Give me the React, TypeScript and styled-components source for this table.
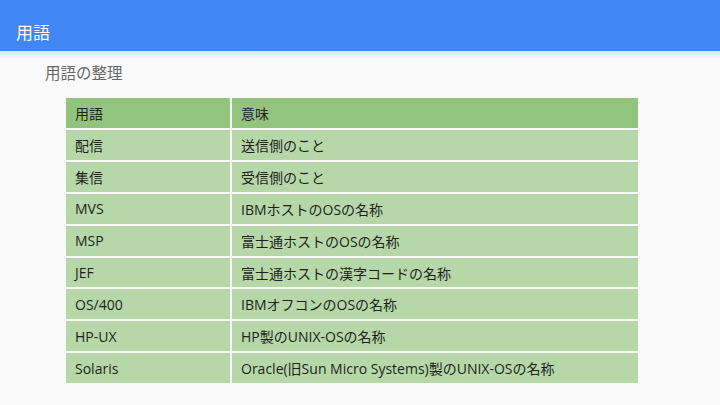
import styled, { createGlobalStyle } from 'styled-components';

const GlobalStyle = createGlobalStyle`
  html, body {
    margin: 0;
    padding: 0;
    background: #fafafa;
  }
  body {
    font-family: "Noto Sans CJK JP", "Liberation Sans", sans-serif;
  }
`;

const Page = styled.div`
  width: 720px;
  height: 405px;
  overflow: hidden;
  background: #fafafa;
  display: flex;
  flex-direction: column;
`;

const TopBar = styled.header`
  height: 51px;
  box-sizing: border-box;
  background: #4285f4;
  display: flex;
  align-items: center;
  padding: 12px 0 0 16px;
  color: #fff;
  font-size: 17px;
  flex-shrink: 0;
`;

const Shade = styled.div`
  height: 7px;
  background: linear-gradient(#dfe7f5, #f2f4f8);
  flex-shrink: 0;
`;

const Subtitle = styled.h2`
  margin: 0;
  padding: 3px 0 0 45px;
  height: 26px;
  font-size: 15.5px;
  font-weight: 400;
  color: #666;
`;

const TableWrap = styled.div`
  padding: 11px 0 0 66px;
`;

const Grid = styled.div`
  width: 572px;
  display: grid;
  grid-template-columns: 164px 1fr;
  row-gap: 2px;
  column-gap: 2px;
  background: #fafafa;
`;

const Cell = styled.div<{ $head?: boolean }>`
  height: ${p => (p.$head ? '30px' : '29.9px')};
  display: flex;
  align-items: center;
  padding-left: 9px;
  background: ${p => (p.$head ? '#93c47d' : '#b6d7a8')};
  color: #1f1f1f;
  font-family: "Open Sans", "Noto Sans CJK JP", sans-serif;
  font-size: 14px;
  white-space: nowrap;
`;

const rows: [string, string][] = [
  ['配信', '送信側のこと'],
  ['集信', '受信側のこと'],
  ['MVS', 'IBMホストのOSの名称'],
  ['MSP', '富士通ホストのOSの名称'],
  ['JEF', '富士通ホストの漢字コードの名称'],
  ['OS/400', 'IBMオフコンのOSの名称'],
  ['HP-UX', 'HP製のUNIX-OSの名称'],
  ['Solaris', 'Oracle(旧Sun Micro Systems)製のUNIX-OSの名称'],
];

export default function App() {
  return (
    <Page>
      <GlobalStyle />
      <TopBar>用語</TopBar>
      <Shade />
      <Subtitle>用語の整理</Subtitle>
      <TableWrap>
        <Grid>
          <Cell $head>用語</Cell>
          <Cell $head>意味</Cell>
          {rows.map(([term, meaning]) => (
            <>
              <Cell key={term}>{term}</Cell>
              <Cell key={term + '-m'}>{meaning}</Cell>
            </>
          ))}
        </Grid>
      </TableWrap>
    </Page>
  );
}
